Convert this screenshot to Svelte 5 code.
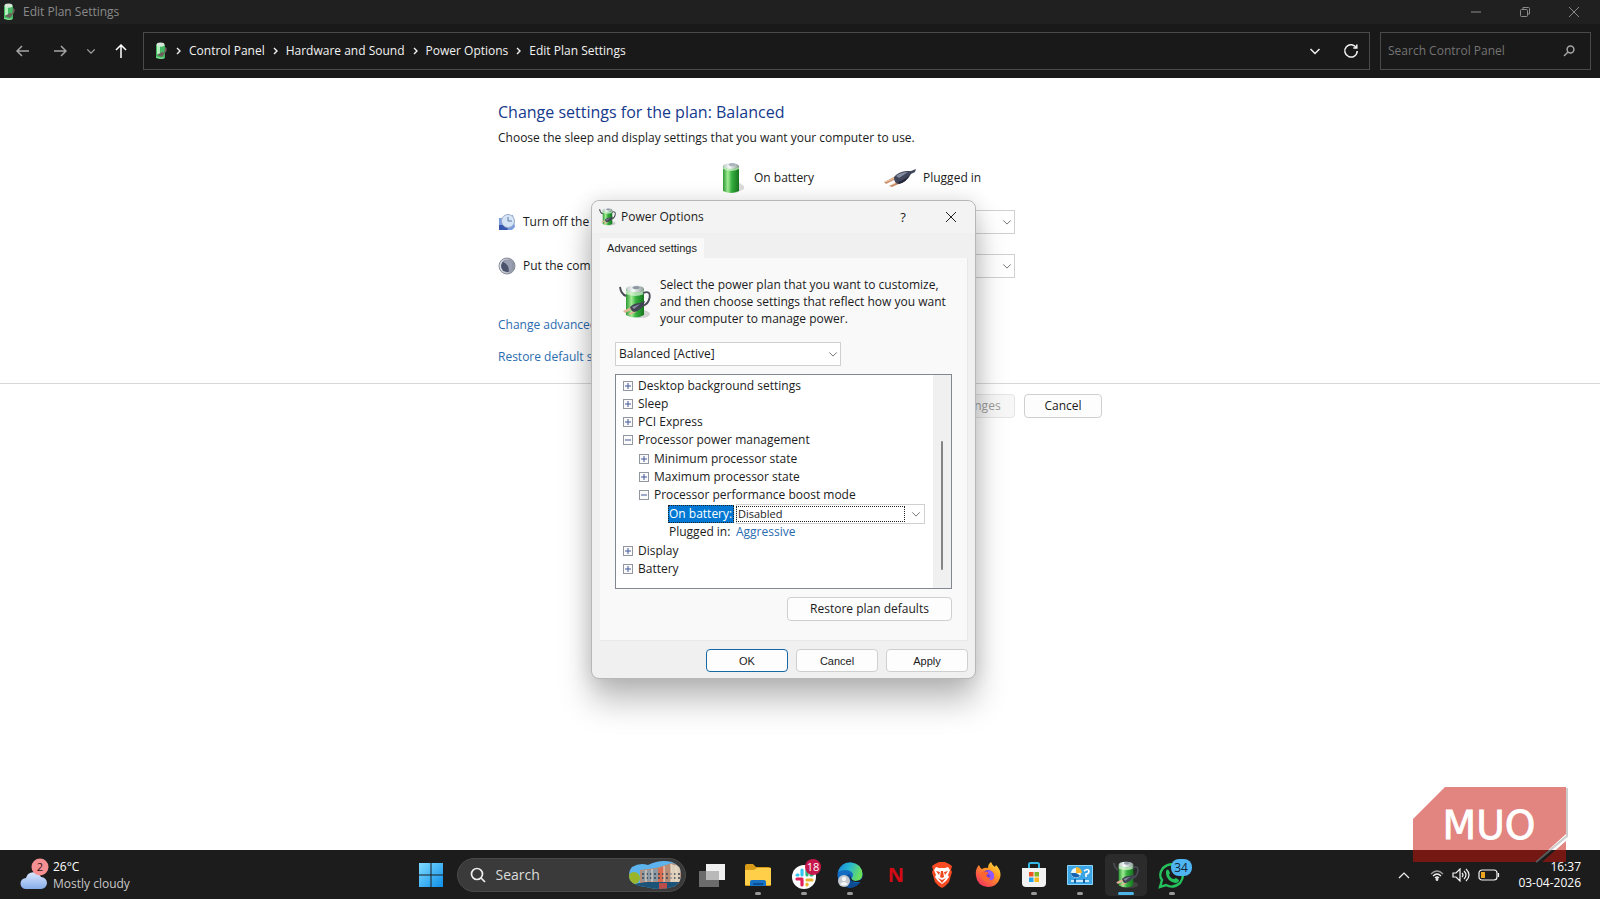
<script>
  let plan = $state('Balanced [Active]');
  let boost = $state('Disabled');
  const crumbs = ['Control Panel', 'Hardware and Sound', 'Power Options', 'Edit Plan Settings'];
</script>

{#snippet chevron(size)}
  <svg class="chev" width={size} height={size} viewBox="0 0 12 12" fill="none" stroke="currentColor" stroke-width="1.2" aria-hidden="true"><path d="M1.5 4 6 8.5 10.5 4" /></svg>
{/snippet}

{#snippet battery(w, h)}
  <svg width={w} height={h} viewBox="0 0 22 32" aria-hidden="true">
    <defs>
      <linearGradient id="cell" x1="0" x2="1"><stop offset="0" stop-color="#2c9a34" /><stop offset=".3" stop-color="#a2ec94" /><stop offset=".55" stop-color="#37b040" /><stop offset="1" stop-color="#16761f" /></linearGradient>
      <linearGradient id="cap" x1="0" x2="1"><stop offset="0" stop-color="#b9c4c4" /><stop offset=".4" stop-color="#f7fafa" /><stop offset="1" stop-color="#8d9a9a" /></linearGradient>
    </defs>
    <path d="M14 31 22 27V24L16 20Z" fill="#999" opacity=".35" />
    <path d="M1 4v25q8 4 16 0V4Z" fill="url(#cell)" />
    <ellipse cx="9" cy="4" rx="8" ry="3" fill="url(#cap)" />
    <ellipse cx="10" cy="2.6" rx="3.4" ry="1.7" fill="#aab4bd" />
    <path d="M1 5q8 4 16 0v2q-8 4-16 0Z" fill="#d7f5d2" opacity=".7" />
  </svg>
{/snippet}

{#snippet plug(w, h)}
  <svg width={w} height={h} viewBox="0 0 32 18" aria-hidden="true">
    <path d="m0 13 10-5 2 2-10 5ZM5 17l10-5 2 2-9 4Z" fill="#c98f68" />
    <path d="m1 13 10-4M7 16l8-4" stroke="#f4d8bd" stroke-width=".8" />
    <path d="M10 8q4-5 12-6l5 0 5-2-1 3-4 2q-4 8-13 10-4-1-4-7Z" fill="#41465a" />
    <path d="M12 7q5-4 12-4l-9 6Z" fill="#868da0" />
    <path d="M14 13q7-2 11-7-2 7-10 9Z" fill="#242838" />
  </svg>
{/snippet}

{#snippet powerIcon(w, h)}
  <svg width={w} height={h} viewBox="0 0 32 34" aria-hidden="true">
    <ellipse cx="22" cy="29" rx="9" ry="4" fill="#777" opacity=".3" />
    <path d="M7 4v26q9 5 18 0V4Z" fill="url(#cell)" />
    <path d="M7 5q9 5 18 0v4q-9 4-18 0Z" fill="#dff6dd" opacity=".7" />
    <ellipse cx="16" cy="4" rx="9" ry="3.4" fill="url(#cap)" />
    <ellipse cx="17" cy="2.6" rx="3.6" ry="1.7" fill="#8e98a4" />
    <path d="M1 2q1 7 6 9M24 8q8-3 6.500 5-1 6-7 8" fill="none" stroke="#4b4e58" stroke-width="1.900" />
    <path d="m4 26 8-4 2 2-8 4ZM9 29l7-4 1 2-6 3Z" fill="#e0b595" />
    <path d="M11 22q4-4 10-4l5-2q-2 9-11 11-3-1-4-5Z" fill="#414453" />
    <path d="m13 22 8-3-6 5Z" fill="#8b91a0" />
  </svg>
{/snippet}

{#snippet miniPower()}
  <svg width="14" height="18" viewBox="0 0 14 18" aria-hidden="true">
    <path d="M2 3v13q5 2 9 0V3Z" fill="#43b963" />
    <path d="M3 3v9q2 1 3 0V3Z" fill="#b0f0ba" />
    <ellipse cx="6.500" cy="2.600" rx="4" ry="2.200" fill="#d7e8d9" />
    <path d="M11 5q3 1 1 5l-2 2M3 13l5-3 3 1-3 4Z" fill="#6d5f5b" />
    <path d="M2 15q4 2 8 1" stroke="#8ee69b" fill="none" />
  </svg>
{/snippet}

{#snippet box(open)}
  <svg width="10" height="10" viewBox="0 0 10 10" fill="none" aria-hidden="true">
    <rect x=".5" y=".5" width="9" height="9" fill="#fafafa" stroke="#92979f" />
    <path d={open ? 'M2 5h6' : 'M2 5h6M5 2v6'} stroke="#42589a" />
  </svg>
{/snippet}

<div class="desktop">
  <header>
    <div class="titlebar">
      {@render miniPower()}
      <span class="wtitle">Edit Plan Settings</span>
      <div class="winbtns">
        <button aria-label="Minimize"><svg width="12" height="12" viewBox="0 0 12 12"><path d="M1 6h10" /></svg></button>
        <button aria-label="Restore"><svg width="12" height="12" viewBox="0 0 12 12"><rect x="1.500" y="3.500" width="7" height="7" rx="1" /><path d="M4 3V1.500h5.500q1 0 1 1V8H9" /></svg></button>
        <button aria-label="Close"><svg width="12" height="12" viewBox="0 0 12 12"><path d="m1 1 10 10M11 1 1 11" /></svg></button>
      </div>
    </div>
    <div class="navbar">
      <nav class="arrows" aria-label="History">
        <button aria-label="Back"><svg width="14" height="14" viewBox="0 0 14 14"><path d="M13 7H1M6 2 1 7l5 5" /></svg></button>
        <button aria-label="Forward"><svg width="14" height="14" viewBox="0 0 14 14"><path d="M1 7h12M8 2l5 5-5 5" /></svg></button>
        <button class="narrow" aria-label="Recent locations">{@render chevron(10)}</button>
        <button class="up" aria-label="Up"><svg width="14" height="14" viewBox="0 0 14 14"><path d="M7 14V1M2 6l5-5 5 5" /></svg></button>
      </nav>
      <div class="address">
        {@render miniPower()}
        {#each crumbs as c}
          <svg class="sep" width="5" height="8" viewBox="0 0 5 8"><path d="m1 1 3 3-3 3" /></svg>
          <a href="#top">{c}</a>
        {/each}
        <span class="grow"></span>
        <button aria-label="Previous locations">{@render chevron(12)}</button>
        <button aria-label="Refresh"><svg width="16" height="16" viewBox="0 0 16 16"><path d="M13.500 5A6.200 6.200 0 1 0 14.200 8M13.800 1.500V5h-3.500" /></svg></button>
      </div>
      <div class="find">
        <input type="search" aria-label="Search Control Panel" placeholder="Search Control Panel" />
        <svg width="12" height="12" viewBox="0 0 12 12"><circle cx="7.500" cy="4.500" r="3.400" /><path d="M5 7 1 11" /></svg>
      </div>
    </div>
  </header>

  <main>
    <div class="column">
      <h1>Change settings for the plan: Balanced</h1>
      <p class="lead">Choose the sleep and display settings that you want your computer to use.</p>
      <div class="grid heads">
        <span></span>
        <span class="head">{@render battery(22, 32)}On battery</span>
        <span class="head plugged">{@render plug(32, 18)}Plugged in</span>
      </div>
      <div class="grid">
        <label class="rowlabel" for="display-dc">
          <svg width="18" height="18" viewBox="0 0 18 18"><path d="M1 5h5l9-3 2 12-3 3H1Z" fill="#7e9dde" /><path d="M1 12h6l3 4-1 1H1Z" fill="#3657ad" /><circle cx="10" cy="8" r="6.500" fill="#d5e5f6" stroke="#9cacc9" /><path d="M10 4v4h4" fill="none" stroke="#5b769f" /></svg>
          Turn off the display:
        </label>
        <span class="pick"><select id="display-dc"><option>5 minutes</option></select>{@render chevron(10)}</span>
        <span class="pick"><select aria-label="Turn off the display, plugged in"><option></option></select>{@render chevron(10)}</span>
        <label class="rowlabel" for="sleep-dc">
          <svg width="18" height="18" viewBox="0 0 18 18"><defs><linearGradient id="moon"><stop stop-color="#e3e5ec" /><stop offset="1" stop-color="#8b8f9d" /></linearGradient></defs><circle cx="9" cy="9" r="8" fill="url(#moon)" stroke="#8a8e9b" /><circle cx="9" cy="9" r="6" fill="#4b526c" /><path d="M8 3q7-1 7 6 0 4-4 6 0-8-6-10Z" fill="#9a9fb2" /></svg>
          Put the computer to sleep:
        </label>
        <span class="pick"><select id="sleep-dc"><option>15 minutes</option></select>{@render chevron(10)}</span>
        <span class="pick"><select aria-label="Put the computer to sleep, plugged in"><option></option></select>{@render chevron(10)}</span>
      </div>
      <div class="links">
        <a href="#advanced">Change advanced power settings</a>
        <a href="#restore">Restore default settings for this plan</a>
      </div>

      <div class="dialog" role="dialog" aria-labelledby="dialog-title">
        <div class="dtitle">
          {@render powerIcon(17, 18)}
          <span id="dialog-title">Power Options</span>
          <button aria-label="Help" class="help">?</button>
          <button aria-label="Close dialog"><svg width="12" height="12" viewBox="0 0 12 12"><path d="m1 1 10 10M11 1 1 11" /></svg></button>
        </div>
        <div class="dbody">
          <button class="tab" role="tab" aria-selected="true">Advanced settings</button>
          <section class="panel">
            <div class="intro">
              {@render powerIcon(32, 34)}
              <p>Select the power plan that you want to customize, and then choose settings that reflect how you want your computer to manage power.</p>
            </div>
            <span class="pick plan"><select aria-label="Power plan" bind:value={plan}><option>Balanced [Active]</option></select>{@render chevron(10)}</span>
            <div class="tree">
              <ul>
                <li><div class="node">{@render box(false)}Desktop background settings</div></li>
                <li><div class="node">{@render box(false)}Sleep</div></li>
                <li><div class="node">{@render box(false)}PCI Express</div></li>
                <li>
                  <div class="node">{@render box(true)}Processor power management</div>
                  <ul class="sub">
                    <li><div class="node">{@render box(false)}Minimum processor state</div></li>
                    <li><div class="node">{@render box(false)}Maximum processor state</div></li>
                    <li>
                      <div class="node">{@render box(true)}Processor performance boost mode</div>
                      <ul class="leaf">
                        <li class="value"><label for="boost">On battery:</label><span class="pick boost"><select id="boost" bind:value={boost}><option>Disabled</option></select>{@render chevron(10)}</span></li>
                        <li class="value"><span class="key">Plugged in:</span><a href="#aggressive">Aggressive</a></li>
                      </ul>
                    </li>
                  </ul>
                </li>
                <li><div class="node">{@render box(false)}Display</div></li>
                <li><div class="node">{@render box(false)}Battery</div></li>
              </ul>
              <div class="track"><div class="thumb"></div></div>
            </div>
            <button class="btn restore">Restore plan defaults</button>
          </section>
          <div class="dbuttons">
            <button class="btn primary">OK</button>
            <button class="btn">Cancel</button>
            <button class="btn">Apply</button>
          </div>
        </div>
      </div>
    </div>
    <div class="footer">
      <div class="column actions">
        <button class="btn save" disabled>Save changes</button>
        <button class="btn">Cancel</button>
      </div>
    </div>
  </main>

  <footer class="taskbar">
    <button class="weather">
      <svg width="30" height="34" viewBox="0 0 30 34">
        <defs><linearGradient id="cloud" x2="0" y2="1"><stop stop-color="#dbe8ff" /><stop offset="1" stop-color="#86ace9" /></linearGradient></defs>
        <path d="M6 31a5.500 5.500 0 0 1 0-11 8 8 0 0 1 15-1 6 6 0 0 1 0 12Z" fill="url(#cloud)" />
        <circle cx="20" cy="9" r="8.500" fill="#f58f92" /><text x="20" y="13" text-anchor="middle" font-size="11" fill="#2a1414">2</text>
      </svg>
      <span><b>26°C</b><i>Mostly cloudy</i></span>
    </button>

    <div class="apps">
      <button class="app" aria-label="Start"><svg width="26" height="26" viewBox="0 0 26 26"><defs><linearGradient id="win" x2="1" y2="1"><stop stop-color="#80dcff" /><stop offset="1" stop-color="#0c8ee8" /></linearGradient></defs><path d="M1 1h11.500v11.500H1ZM13.500 1H25v11.500H13.500ZM1 13.500h11.500V25H1ZM13.500 13.500H25V25H13.500Z" fill="url(#win)" /></svg></button>
      <div class="search">
        <svg class="mag" width="16" height="16" viewBox="0 0 16 16"><circle cx="7" cy="7" r="5.500" /><path d="m11 11 4 4" /></svg>
        <input type="text" aria-label="Search" placeholder="Search" />
        <svg width="54" height="30" viewBox="0 0 54 30">
          <clipPath id="scene"><path d="M4 7Q12 2 20 5 32-1 44 2q10 4 9 14-1 9-9 11-12 4-26 0Q1 25 1 16q0-6 3-9Z" /></clipPath>
          <g clip-path="url(#scene)">
            <path d="M0 0h54v30H0Z" fill="#5cb3ee" /><path d="M12 10 28 8 44 3l9 3v18H12Z" fill="#b98c78" />
            <path d="M14 11 30 9v12H14Z" fill="#8b9aa5" /><path d="m30 9 6-3v16h-6Z" fill="#d96d52" /><path d="m43 4 9 3v15h-9Z" fill="#ddcfb9" />
            <path d="M14 14h38M14 18h38" stroke="#3d4652" stroke-dasharray="2 2" stroke-width="1.500" /><path d="M18 10v14M24 9v14M36 6v16M43 4v18M48 5v16" stroke="#eedfcd" />
            <path d="M0 25 18 22h36v8H0Z" fill="#1c5379" /><circle cx="6" cy="18" r="6" fill="#9bb52a" /><path d="M31 23h8v6h-8Z" fill="#bb4e4b" />
          </g>
        </svg>
      </div>
      <button class="app" aria-label="Task view"><svg width="26" height="24" viewBox="0 0 26 24"><path d="M7 1h19v16H7Z" fill="#f0f0f0" /><path d="M0 8h20v16H0Z" fill="#6c6c6c" /><path d="M7 8h13v9H7Z" fill="#b9b9b9" /></svg></button>
      <button class="app run" aria-label="File Explorer"><svg width="26" height="24" viewBox="0 0 26 24"><path d="M0 3q0-2 2-2h6l3 3h12q3 0 3 2v16q0 1-1 1H1q-1 0-1-1Z" fill="#d99b17" /><path d="M0 7h9l3-2h14v17H0Z" fill="#ffcf4a" /><path d="M5 23v-4q0-2 2-2h12q2 0 2 2v4Z" fill="#1873c5" /><path d="M8 21h10" stroke="#0a4f96" stroke-width="2" /></svg></button>
      <button class="app run" aria-label="Slack"><svg width="36" height="32" viewBox="0 0 36 32"><circle cx="18" cy="18" r="12" fill="#fff" /><g stroke-width="3.200" stroke-linecap="round"><path d="M16 11v5M11 16h1" stroke="#36c5f0" /><path d="M21 11v5M25 16h1" stroke="#2eb67d" /><path d="M16 21v5M11 20h5" stroke="#e01e5a" /><path d="M21 21h5M21 26v-1" stroke="#ecb22e" /></g><circle cx="27" cy="8" r="8" fill="#c7184d" /><text x="27" y="12" text-anchor="middle" font-size="11" fill="#fff">18</text></svg></button>
      <button class="app run" aria-label="Edge"><svg width="26" height="26" viewBox="0 0 26 26"><defs><linearGradient id="edge" x2="1" y2=".3"><stop stop-color="#1683dc" /><stop offset=".5" stop-color="#28b7d0" /><stop offset="1" stop-color="#6ce05c" /></linearGradient></defs><circle cx="13" cy="13" r="12.500" fill="#136bc2" /><path d="M1 10Q4 0 14 .5q11 1 11.500 12-.5 6-7 6.500-5 0-4-3 3-3 0-6-5-4-13.500 0Z" fill="url(#edge)" /><path d="M13 12q-2 7 5 9 4 0 6-3-4 8-12 8-8-3-4-11 2-3 5-3Z" fill="#0b4c94" /><path d="M14 13q-1 5 4 6 6 0 8-4v5H18q-7-1-4-7Z" fill="#1c1c1c" /><circle cx="7" cy="19" r="6" fill="#c3c9ce" /><circle cx="7" cy="17" r="2.200" fill="#f4f5f6" /><path d="M3 22q4-4 8 0-4 3-8 0Z" fill="#f4f5f6" /></svg></button>
      <button class="app" aria-label="Netflix"><svg width="24" height="32" viewBox="0 0 24 32"><text x="12" y="23" text-anchor="middle" font-size="20" font-weight="700" font-family="Liberation Sans, sans-serif" fill="#d30b16">N</text></svg></button>
      <button class="app" aria-label="Brave"><svg width="22" height="26" viewBox="0 0 22 26"><path d="m6 1 2-1h6l2 1 2 1 3 2-1 4 1 2-3 10q-3 4-7 6-4-2-7-6L1 10l1-2-1-4 3-2Z" fill="#f84b22" /><path d="m5 5 3 1h6l3-1 2 3-2 5 1 2-3 4-4 3-4-3-3-4 1-2-2-5Z" fill="#fff" /><path d="m5 9 4 1-1 3ZM17 9l-4 1 1 3ZM10 9h2l1 6-2 1-2-1ZM7 16l4 2 4-2-4 5Z" fill="#f0481e" /></svg></button>
      <button class="app" aria-label="Firefox"><svg width="26" height="26" viewBox="0 0 26 26"><defs><linearGradient id="fox" x1="1" x2=".2" y2="1"><stop stop-color="#fff04b" /><stop offset=".4" stop-color="#ff9c22" /><stop offset="1" stop-color="#f22e5e" /></linearGradient></defs><path d="M4 3q1 3 3 4 3-2 6-1 0-4 3-6 1 3 4 5l1-2q6 6 4 13-3 9-12 9Q2 24 1 14 0 7 4 3Z" fill="url(#fox)" /><circle cx="13" cy="14" r="6" fill="#7942d3" /><path d="M5 11q4-3 10 0-5 1-3 4 3 2 7-2 0 8-7 7-6-1-7-9Z" fill="#ff6530" /><path d="M14 8q6 2 5 8-2 3-5 2 3-3 0-6-2-2 0-4Z" fill="#9059ff" /></svg></button>
      <button class="app run" aria-label="Store"><svg width="26" height="26" viewBox="0 0 26 26"><path d="M8 8V2.500Q8 1 9.500 1h7Q18 1 18 2.500V8" fill="none" stroke="#35b7e6" stroke-width="2" /><path d="M1 6h24v15q0 4-4 4H5q-4 0-4-4Z" fill="#f2f2f2" /><path d="M8 10h4.500v4.500H8Z" fill="#f05125" /><path d="M13.500 10H18v4.500h-4.500Z" fill="#7eb828" /><path d="M8 15.500h4.500V20H8Z" fill="#26a4e9" /><path d="M13.500 15.500H18V20h-4.500Z" fill="#f9b81a" /></svg></button>
      <button class="app run" aria-label="Control Panel"><svg width="26" height="22" viewBox="0 0 26 22"><path d="M.5 1.500h25v19H.5Z" fill="#3aa4e4" stroke="#8bd4f7" /><circle cx="9" cy="9" r="5" fill="#e9f7ff" /><path d="M9 9V3a6 6 0 0 1 6 6Z" fill="#f9b82c" /><path d="M9 9H4a5 5 0 0 0 9 2.500Z" fill="#1763ae" /><path d="M17 7q4-3 5 0 0 3-3 3v3" fill="none" stroke="#fff" stroke-width="1.600" /><path d="M4 17h18" stroke="#fff" stroke-width="1.500" /><path d="M8 15v4M17 15v4" stroke="#175e9e" stroke-width="2" /></svg></button>
      <button class="app active" aria-label="Edit Plan Settings">{@render powerIcon(26, 28)}</button>
      <button class="app run" aria-label="WhatsApp"><svg width="42" height="34" viewBox="0 0 42 34"><path d="m9 29 2-7q-4-5 1-12 8-7 17-1 6 8 0 16-7 6-14 2Z" fill="none" stroke="#25c15d" stroke-width="2.400" /><path d="M15 13q2-3 3 0l1 2-1 2q2 4 5 4l2-1 3 2q0 3-4 3-8-2-9-9Z" fill="#25c15d" /><rect x="20" y="1" width="21" height="17" rx="8" fill="#4fb5f2" /><text x="30" y="14" text-anchor="middle" font-size="12" fill="#122536">34</text></svg></button>
    </div>

    <div class="tray">
      <button class="hidden-icons" aria-label="Show hidden icons"><svg width="12" height="8" viewBox="0 0 12 8"><path d="m1 7 5-5 5 5" /></svg></button>
      <svg width="14" height="12" viewBox="0 0 14 12"><path d="M1 5q6-6 12 0" opacity=".6" /><path d="M3 7q4-4 8 0M5 9q2-2 4 0" /><circle cx="7" cy="10.500" r=".8" /></svg>
      <svg width="18" height="14" viewBox="0 0 18 14"><path d="M1 5h3l4-4v12L4 9H1ZM10 5q2 2 0 4M12 3q4 4 0 8M14 1q6 6 0 12" /></svg>
      <svg width="22" height="12" viewBox="0 0 22 12"><rect x="1" y="1" width="18" height="10" rx="3" /><path d="M20.500 4v4" /><path d="M3 3h4v6H3Z" class="fill" /></svg>
      <time>16:37<br />03-04-2026</time>
    </div>
  </footer>

  <svg class="badge" width="156" height="78" viewBox="0 0 156 78" role="img" aria-label="MUO">
    <path d="M155 2v48l-31 26" stroke="#999" stroke-width="2" fill="none" opacity=".5" />
    <path d="M1 33 33 1h121v47l-31 28H1Z" fill="#c8140c" opacity=".52" />
    <path d="M154 55v21h-24Z" fill="#c8140c" opacity=".52" />
    <text x="77" y="53" text-anchor="middle" font-size="39" font-family="DejaVu Sans, sans-serif" fill="#fff" stroke="#fff" stroke-width=".8">MUO</text>
  </svg>
</div>

<style>
  :global(body) { margin: 0; background: #fff; }
  .desktop { min-height: 100vh; display: flex; flex-direction: column; position: relative; overflow: hidden; font: 12px/16px "Open Sans", "Noto Sans", sans-serif; color: #1b1b1b; }
  button, input, select { font: inherit; color: inherit; }
  button { border: 0; padding: 0; background: none; }
  a { color: inherit; text-decoration: none; }
  svg { flex: none; }
  select, input { appearance: none; outline: 0; }

  header { background: #191919; color: #f2f2f2; }
  header svg:not([aria-hidden]), header .chev { fill: none; stroke: currentColor; }
  .titlebar { height: 24px; background: #202020; display: flex; align-items: center; gap: 7px; padding: 0 2px; color: #8a8a8a; }
  .wtitle { flex: 1; }
  .winbtns { display: flex; }
  .winbtns button { width: 49px; display: grid; place-items: center; }
  .navbar { display: flex; align-items: center; gap: 5px; height: 54px; padding: 0 9px 0 4px; box-sizing: border-box; }
  .arrows { display: flex; width: 134px; flex: none; align-items: center; color: #a5a5a5; }
  .arrows button { width: 37px; display: grid; place-items: center; }
  .arrows svg { stroke-width: 1.5; }
  .arrows .narrow { width: 26px; }
  .arrows .up { width: 34px; color: #fff; }
  .address { flex: 1; height: 36px; display: flex; align-items: center; gap: 8px; border: 1px solid #4a4a4a; padding: 0 4px 0 10px; margin-right: 5px; }
  .address button { width: 28px; display: grid; place-items: center; }
  .address button svg { stroke-width: 1.5; }
  .grow { flex: 1; }
  .sep { stroke-width: 1.4; }
  .find { width: 209px; height: 36px; display: flex; align-items: center; border: 1px solid #4a4a4a; color: #a5a5a5; }
  .find input { flex: 1; min-width: 0; border: 0; background: none; padding: 0 7px; }
  .find svg { margin-right: 15px; stroke-width: 1.5; }
  .find input::placeholder { color: #747474; opacity: 1; }

  main { flex: 1; }
  .column { width: 604px; margin: 0 auto; position: relative; }
  h1 { margin: 0; padding-top: 22px; font-size: 16px; line-height: 24px; font-weight: 400; color: #15398c; white-space: nowrap; }
  .lead { margin: 6px 0 10px; }
  .grid { display: grid; grid-template-columns: 222px 164px 131px; row-gap: 20px; width: 517px; }
  .grid .pick { width: 131px; }
  .head { display: flex; align-items: center; gap: 10px; height: 44px; padding-left: 2px; }
  .head.plugged { gap: 7px; padding-left: 0; }
  .heads { margin-bottom: 10px; }
  .rowlabel { display: flex; align-items: center; gap: 7px; }
  .pick { position: relative; display: block; height: 24px; }
  .pick select { width: 100%; height: 100%; padding: 0 3px; box-sizing: border-box; background: #fff; border: 1px solid #d0d0d0; border-radius: 0; }
  .pick .chev { position: absolute; right: 3px; top: 7px; color: #777; pointer-events: none; }
  .links { margin-top: 39px; display: grid; gap: 16px; color: #2b6cb0; padding-bottom: 18px; justify-items: start; }
  .footer { border-top: 1px solid #d8d8d8; padding-top: 10px; }
  .actions { display: flex; justify-content: flex-end; gap: 9px; position: static; }
  .btn { width: 82px; height: 23px; border: 1px solid #cfcfcf; border-radius: 4px; background: #fdfdfd; }
  .actions .btn { width: 78px; height: 24px; }
  .actions .save { width: 104px; color: #9c9c9c; background: #f7f7f7; border-color: #e4e4e4; }

  .dialog { position: absolute; left: 93px; top: 122px; width: 385px; height: 479px; box-sizing: border-box; border: 1px solid #b7b7b7; border-radius: 8px; background: #f0f0f0; box-shadow: 0 22px 32px rgba(0, 0, 0, .26), 0 0 20px rgba(0, 0, 0, .12); z-index: 2; }
  .dtitle { height: 32px; display: flex; align-items: center; gap: 5px; padding: 0 3px 0 7px; background: #f3f3f3; border-radius: 8px 8px 0 0; }
  .dtitle span { flex: 1; }
  .dtitle button { width: 42px; display: grid; place-items: center; }
  .dtitle button svg { stroke: #222; }
  .dtitle .help { width: 44px; font-size: 13px; }
  .dbody { padding: 5px 7px 0 8px; }
  .tab { display: block; width: 104px; height: 20px; background: #f9f9f9; font: 11px/16px "Liberation Sans", Inter, sans-serif; }
  .panel { background: #f9f9f9; border: 1px solid #e8e8e8; border-width: 0 1px 1px 0; padding: 18px 15px; height: 383px; box-sizing: border-box; display: flex; flex-direction: column; }
  .intro { display: flex; gap: 9px; padding-left: 4px; align-items: center; }
  .intro p { margin: 0; line-height: 17px; flex: 1; }
  .plan { width: 226px; margin: 15px 0 8px; }
  .tree { height: 215px; box-sizing: border-box; border: 1px solid #828790; background: #fff; display: flex; line-height: 18px; }
  ul { list-style: none; margin: 0; padding: 0; }
  .tree > ul { flex: 1; padding: 2px 0 0 7px; }
  .sub { padding: 1px 0 1px 16px; }
  .leaf { padding: 1px 0 0 29px; }
  .node { display: flex; align-items: center; gap: 5px; height: 18px; white-space: nowrap; }
  .value { display: flex; height: 18px; align-items: center; }
  .value label, .key { width: 66px; box-sizing: border-box; padding: 0 1px; white-space: nowrap; }
  .value label { background: #0078d4; color: #fff; outline: 1px dotted #222; outline-offset: -1px; }
  .value a { color: #2b6cb0; padding-left: 2px; }
  .boost { width: 189px; height: 20px; margin-left: 2px; }
  .boost select { padding: 0 1px; font-size: 11px; }
  .boost::before { content: ""; position: absolute; inset: 2px 20px 2px 0; border: 1px dotted #222; pointer-events: none; }
  .boost .chev { top: 5px; right: 4px; }
  .track { width: 18px; background: #f0f0f0; display: flex; justify-content: center; padding: 66px 0 18px; box-sizing: border-box; }
  .thumb { width: 2px; background: #858585; border-radius: 1px; }
  .restore { width: 165px; height: 24px; align-self: flex-end; margin-top: 8px; }
  .dbuttons { display: flex; justify-content: flex-end; gap: 8px; margin-top: 8px; font: 11px/16px "Liberation Sans", Inter, sans-serif; }
  .primary { border-color: #1668a5; }

  .taskbar { height: 49px; background: #1c1c1c; color: #fff; display: grid; grid-template-columns: 1fr auto 1fr; align-items: center; font-size: 12px; }
  .taskbar text { font-family: "Open Sans", sans-serif; }
  .weather { display: flex; gap: 3px; padding-left: 20px; justify-self: start; text-align: left; align-items: center; }
  .weather b, .weather i { display: block; font-weight: 400; font-style: normal; line-height: 17px; }
  .weather i { color: #c8c8c8; }
  .apps { display: flex; align-items: center; padding-left: 2px; }
  .app { width: 46px; height: 42px; display: grid; place-items: center; position: relative; border-radius: 5px; }
  .app.active { width: 42px; margin: 0 2px; background: #2b2b2b; }
  .run::after, .active::after { content: ""; position: absolute; bottom: 1px; left: calc(50% - 3px); width: 6px; height: 3px; border-radius: 2px; background: #9a9a9a; }
  .active::after { width: 16px; left: calc(50% - 8px); background: #4cb6e8; }
  .search { width: 229px; height: 34px; box-sizing: border-box; margin: 0 3px; display: flex; align-items: center; gap: 10px; padding: 0 3px 0 12px; border: 1px solid #4a4a4a; border-radius: 17px; background: #3a3a3a; }
  .search input { flex: 1; min-width: 0; border: 0; padding: 0; background: none; font-size: 14px; }
  .search input::placeholder { color: #dcdcdc; opacity: 1; }
  .mag { fill: none; stroke: #eee; stroke-width: 1.7; }
  .tray { display: flex; align-items: center; justify-content: flex-end; gap: 8px; padding-right: 19px; }
  .tray svg { fill: none; stroke: #f3f3f3; stroke-width: 1.2; }
  .tray .fill { fill: #e9a51d; stroke: none; }
  .hidden-icons { margin-right: 12px; }
  .tray time { text-align: right; line-height: 16px; margin-left: 10px; }
  .badge { position: absolute; right: 32px; bottom: 35px; z-index: 3; pointer-events: none; }
</style>
